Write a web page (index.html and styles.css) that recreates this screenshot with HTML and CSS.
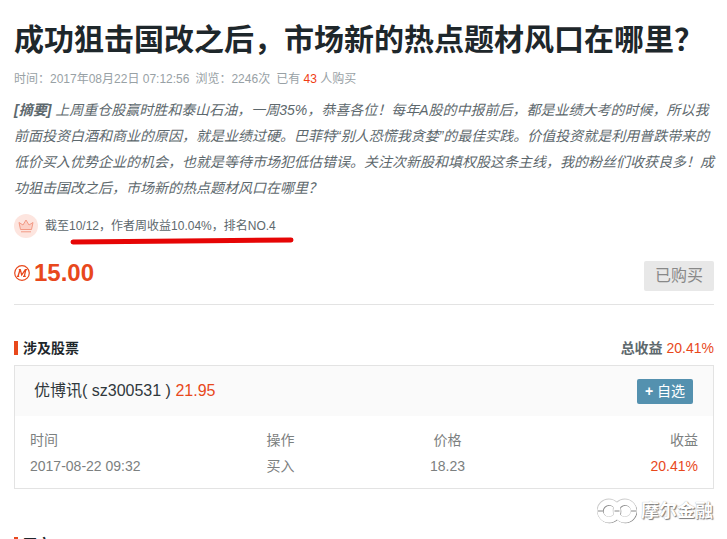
FILE: index.html
```html
<!DOCTYPE html>
<html lang="zh-CN">
<head>
<meta charset="utf-8">
<title>成功狙击国改之后</title>
<link rel="stylesheet" href="styles.css">
</head>
<body>
<main class="page">
  <h1 class="title">成功狙击国改之后&#65292;市场新的热点题材风口在哪里&#65311;</h1>
  <p class="meta"><span>时间&#65306;2017年08月22日 07:12:56</span><span>浏览&#65306;2246次</span><span>已有 <b class="count">43</b> 人购买</span></p>
  <p class="summary"><strong>[摘要]</strong> 上周重仓股赢时胜和泰山石油&#65292;一周35%&#65292;恭喜各位&#65281;每年A股的中报前后&#65292;都是业绩大考的时候&#65292;所以我前面投资白酒和商业的原因&#65292;就是业绩过硬。巴菲特“别人恐慌我贪婪”的最佳实践。价值投资就是利用普跌带来的低价买入优势企业的机会&#65292;也就是等待市场犯低估错误。关注次新股和填权股这条主线&#65292;我的粉丝们收获良多&#65281;成功狙击国改之后&#65292;市场新的热点题材风口在哪里&#65311;</p>
  <div class="rank">
    <svg class="crown" viewBox="0 0 24 24" aria-hidden="true">
      <circle cx="12" cy="12" r="12" fill="#fde5df"/>
      <path d="M6.500 15.500 5 8.500l4 2.500L12 6l3 5 4-2.500-1.500 7z" fill="#fcd0c5" stroke="#f29a85" stroke-linejoin="round"/>
      <path d="M7 17.800h10" stroke="#f29a85"/>
    </svg>
    <span>截至10/12&#65292;作者周收益10.04%&#65292;排名NO.4</span>
    <svg class="underline" viewBox="0 0 226 8" aria-hidden="true"><path d="M3 5 C60 4 150 4 221 3" fill="none" stroke="#e60505" stroke-width="5" stroke-linecap="round"/></svg>
  </div>
  <div class="buy">
    <div class="price">
      <svg class="coin" viewBox="0 0 16 16" aria-hidden="true">
        <circle cx="8" cy="8" r="7.300" fill="none" stroke="#e8481c" stroke-width="1.200"/>
        <path d="M2.800 11.400h2.400M4 11.300 6 4.700M4.800 4.700h1.500l1.400 5.300 3.600-5.300h1.900M11.800 4.700 10.300 11.300M9 11.400h2.800" fill="none" stroke="#e8481c" stroke-width="1.300"/>
      </svg>
      <span>15.00</span>
    </div>
    <button class="bought" type="button">已购买</button>
  </div>
  <section>
    <div class="bar">
      <h2 class="heading">涉及股票</h2>
      <div class="total"><strong>总收益</strong> <span class="red">20.41%</span></div>
    </div>
    <div class="panel">
      <div class="stock">
        <div>优博讯( sz300531 ) <span class="red">21.95</span></div>
        <button class="add" type="button"><b>+</b> 自选</button>
      </div>
      <table class="trades">
        <thead><tr><th>时间</th><th>操作</th><th>价格</th><th>收益</th></tr></thead>
        <tbody><tr><td>2017-08-22 09:32</td><td>买入</td><td>18.23</td><td class="red">20.41%</td></tr></tbody>
      </table>
    </div>
  </section>
  <section class="body-text">
    <h2 class="heading">正文</h2>
  </section>
  <div class="watermark">
    <svg class="rings" viewBox="0 0 40 26" aria-hidden="true">
      <g fill="none" stroke="#8a8a8a" stroke-width="6"><circle cx="12.500" cy="13.500" r="8.800"/><circle cx="28.500" cy="13.500" r="8.800"/></g>
      <g fill="none" stroke="#ccc" stroke-width="6"><circle cx="11.700" cy="12.500" r="9"/><circle cx="27.700" cy="12.500" r="9"/></g>
      <g fill="none" stroke="#fff" stroke-width="5.400"><circle cx="12" cy="13" r="8.800"/><circle cx="28" cy="13" r="8.800"/></g>
      <path d="M1 13h5M17.500 13h5M34 13h5" stroke="#888" stroke-width="1"/>
    </svg>
    <span>摩尔金融</span>
  </div>
</main>
</body>
</html>
```
FILE: styles.css
```css
* { box-sizing: border-box; }
body {
  margin: 0;
  background: #fff;
  color: #5d686d;
  font: 14px/26px "Liberation Sans", "Noto Sans CJK SC", sans-serif;
}
h1, h2, p { margin: 0; }
button { border: 0; border-radius: 2px; font-family: inherit; }
.page {
  position: relative;
  height: 100vh;
  overflow: hidden;
  padding: 20px 13px 0 14px;
}
.title { color: #1e272b; font-size: 30px; line-height: 40px; white-space: nowrap; }
.meta {
  display: flex;
  gap: 6px;
  margin-top: 9px;
  color: #98a1a5;
  font-size: 12px;
  line-height: 20px;
}
.count { color: #f03c14; font-weight: 400; }
.summary { margin-top: 8px; font-style: italic; }
.rank {
  position: relative;
  display: flex;
  align-items: center;
  gap: 7px;
  margin-top: 13px;
  font-size: 12px;
  line-height: 24px;
}
.crown { width: 24px; height: 24px; }
.underline { position: absolute; left: 56px; top: 23px; width: 226px; height: 8px; }
.buy {
  display: flex;
  justify-content: space-between;
  align-items: flex-end;
  margin-top: 20px;
  padding-bottom: 13px;
  border-bottom: 1px solid #e3e3e3;
}
.price {
  display: flex;
  align-items: center;
  gap: 4px;
  align-self: flex-start;
  color: #e8481c;
  font-size: 24px;
  font-weight: 700;
  line-height: 30px;
}
.coin { width: 16px; height: 16px; }
.bought {
  margin-top: 3px;
  padding: 0 11px;
  background: #e8e8e8;
  color: #888;
  font-size: 16px;
  line-height: 30px;
}
.red { color: #e8481c; }
.bar {
  display: flex;
  justify-content: space-between;
  align-items: center;
  margin-top: 30px;
}
.heading {
  display: flex;
  align-items: center;
  gap: 5px;
  color: #1e272b;
  font-size: 14px;
  line-height: 26px;
}
.heading::before { content: ""; width: 4px; height: 14px; background: #e8481c; }
.panel { margin-top: 4px; border: 1px solid #e3e3e3; }
.stock {
  display: flex;
  justify-content: space-between;
  align-items: center;
  height: 50px;
  padding: 0 20px 0 19px;
  background: #fafafa;
  color: #30383c;
  font-size: 16px;
}
.add {
  padding: 0 8px;
  background: #5491af;
  color: #fff;
  font-size: 14px;
  line-height: 25px;
}
.trades {
  width: calc(100% - 30px);
  margin: 11px 15px 9px;
  border-collapse: collapse;
  table-layout: fixed;
  color: #7c8080;
}
.trades th, .trades td { padding: 0; font-weight: 400; text-align: center; }
.trades th:first-child, .trades td:first-child { text-align: left; }
.trades th:last-child, .trades td:last-child { text-align: right; }
.trades .red { color: #e8481c; }
.body-text { margin-top: 42px; }
.watermark {
  position: absolute;
  right: 14px;
  bottom: 15px;
  display: flex;
  align-items: center;
  gap: 4px;
  color: #fff;
  font-size: 18px;
  font-weight: 700;
  text-shadow: 1px 1px 1px #777, 0 0 1px #aaa;
}
.rings { width: 40px; height: 26px; }
```
